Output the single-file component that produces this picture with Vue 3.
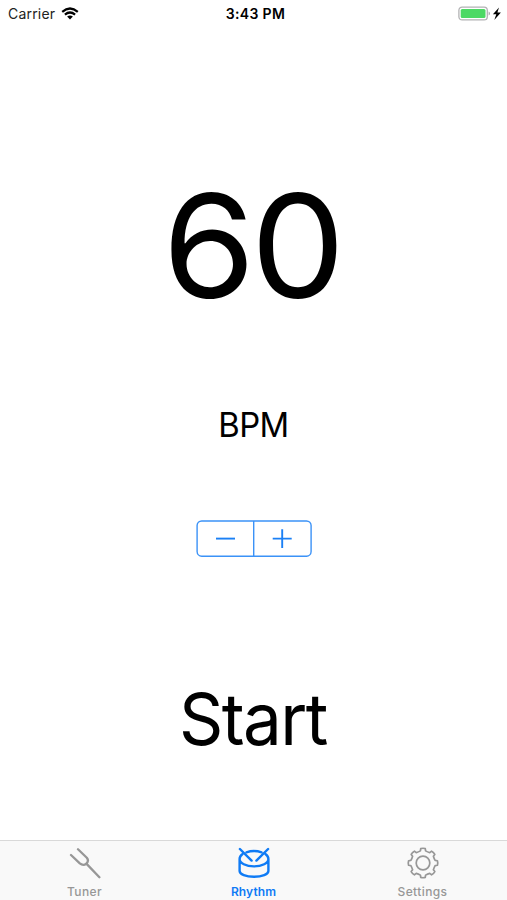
<script setup>
import { ref } from 'vue'

const bpm = ref(60)

// Outline of the settings gear: eight rounded teeth around a centre at 16,16.
function gearPath() {
  const point = (radius, degrees) => {
    const a = (degrees * Math.PI) / 180
    return `${(16 + radius * Math.sin(a)).toFixed(2)} ${(16 - radius * Math.cos(a)).toFixed(2)}`
  }
  let d = ''
  for (let i = 0; i < 8; i++) {
    const a = i * 45
    d += `${i ? 'L' : 'M'}${point(12.4, a - 12)}L${point(14.6, a - 9)}Q${point(15.1, a)} ${point(14.6, a + 9)}L${point(12.4, a + 12)}Q${point(11.9, a + 22.5)} ${point(12.4, a + 33)}`
  }
  return d + 'Z'
}
const gear = gearPath()
</script>

<template>
  <div class="screen">
    <header class="status">
      <div class="carrier">
        <span class="carrier-name">Carrier</span>
        <svg class="wifi" width="18" height="14" viewBox="0 0 18 14">
          <path d="M1.2 4.8Q9-1.8 16.8 4.8M3.9 7.6Q9 3.4 14.1 7.6" fill="none" stroke="#000" stroke-width="2.2" />
          <path d="M6.1 9.6Q9 7.5 11.9 9.6L9 12.6Z" />
        </svg>
      </div>
      <span class="time">3:43 PM</span>
      <div class="power">
        <svg width="45" height="16" viewBox="0 0 45 16">
          <rect x="0.9" y="1.1" width="28.4" height="12.8" rx="3.2" fill="#fff" stroke="#b2b2b4" stroke-width="1.3" />
          <rect x="2.7" y="2.9" width="24.8" height="9.2" rx="1.5" fill="#4cd964" />
          <path d="M30.6 5.5Q32 6 32 7.5T30.6 9.5Z" fill="#a9a9ac" />
          <path d="M41 1.5L34.9 8.3H38.3L36.3 13.9L42.9 6.6H39.4Z" />
        </svg>
      </div>
    </header>

    <main class="metronome">
      <div class="tempo"><span>{{ bpm }}</span></div>
      <div class="unit"><span>BPM</span></div>
      <div class="stepper">
        <svg class="frame" width="116" height="37" viewBox="0 0 116 37">
          <rect x="1.1" y="1" width="114" height="35.2" rx="4.6" />
          <path d="M57.7 1V36.2" />
        </svg>
        <button class="step" aria-label="Decrease" @click="bpm--">
          <svg width="20" height="20" viewBox="0 0 20 20"><path d="M1 9.6H20" /></svg>
        </button>
        <button class="step" aria-label="Increase" @click="bpm++">
          <svg width="20" height="20" viewBox="0 0 20 20"><path d="M.7 9.6H19.7M10.2 .2V19" /></svg>
        </button>
      </div>
      <button class="start"><span>Start</span></button>
    </main>

    <nav class="tabs">
      <a class="tab">
        <svg width="32" height="32" viewBox="0 0 32 32">
          <path d="M2 8L10.8 16.4Q14.3 19.2 17.3 16.6T17.8 10.8L9 2.2M17.6 16.9L30.4 30.2" stroke-width="2.3" />
        </svg>
        <span>Tuner</span>
      </a>
      <a class="tab active">
        <svg width="32" height="32" viewBox="0 0 32 32">
          <path d="M4.6 6.9C2.6 8.3 1.6 10.1 1.6 12C1.6 16.2 8 19.4 16 19.4S30.4 16.2 30.4 12C30.4 10.1 29.4 8.3 27.4 6.9M8.4 5.3C12.6 3.9 19.4 3.9 23.6 5.3M1.6 12V24C1.6 27.4 8 29.8 16 29.8S30.4 27.4 30.4 24V12" />
          <path d="M1.9 2L13.6 13.6M30.1 2L18.4 13.6" />
        </svg>
        <span>Rhythm</span>
      </a>
      <a class="tab">
        <svg width="32" height="32" viewBox="0 0 32 32">
          <path :d="gear" stroke-width="1.7" />
          <circle cx="16" cy="16" r="6.8" stroke-width="1.7" />
        </svg>
        <span>Settings</span>
      </a>
    </nav>
  </div>
</template>

<style>
body {
  margin: 0;
  background: #fff;
}
</style>

<style scoped>
.screen {
  display: flex;
  flex-direction: column;
  width: 507px;
  height: 900px;
  overflow: hidden;
  font-family: Inter, "Liberation Sans", sans-serif;
  color: #000;
}
.status {
  display: grid;
  grid-template-columns: 1fr auto 1fr;
  align-items: center;
  height: 27px;
  padding: 0 4px 0 8px;
  box-sizing: border-box;
}
.carrier {
  display: flex;
  align-items: center;
  gap: 6px;
}
.carrier-name {
  font-size: 14px;
  letter-spacing: 0.2px;
  color: #222;
}
.time {
  font-size: 14px;
  font-weight: 600;
  letter-spacing: 0.35px;
}
.power {
  display: flex;
  justify-content: flex-end;
}
.metronome {
  display: flex;
  flex: 1;
  flex-direction: column;
  align-items: center;
}
.tempo {
  margin-top: 129px;
  height: 180px;
  font-size: 144px;
  line-height: 180px;
  letter-spacing: -4.6px;
}
.tempo span,
.unit span,
.start span {
  display: inline-block;
}
.tempo span {
  margin-right: 4.6px;
  transform: scaleX(1.04);
}
.unit {
  margin-top: 69px;
  height: 40px;
  font-size: 34px;
  line-height: 40px;
  letter-spacing: -0.6px;
}
.unit span {
  margin-right: 0.6px;
  transform: scaleX(0.965);
}
.stepper {
  display: grid;
  grid-template-columns: 58px 56px;
  width: 116px;
  height: 37px;
  margin-top: 75px;
}
.frame {
  grid-area: 1 / 1 / 2 / 3;
  fill: none;
  stroke: #3b92f7;
  stroke-width: 1.4;
}
.step {
  display: flex;
  grid-row: 1;
  align-items: center;
  justify-content: center;
  padding: 0;
  border: 0;
  background: none;
}
.step:nth-of-type(1) {
  grid-column: 1;
}
.step:nth-of-type(2) {
  grid-column: 2;
}
.step path {
  fill: none;
  stroke: #1b80f5;
  stroke-width: 1.9;
}
.start {
  height: 90px;
  margin-top: 117px;
  padding: 0;
  border: 0;
  background: none;
  color: inherit;
  font: 72px/90px Inter, "Liberation Sans", sans-serif;
  letter-spacing: -1.7px;
}
.start span {
  margin-right: 1.7px;
  transform: scaleX(0.96);
}
.tabs {
  display: grid;
  grid-template-columns: repeat(3, 1fr);
  height: 60px;
  box-sizing: border-box;
  border-top: 1px solid #d9d9d9;
  background: #f9f9f9;
}
.tab {
  display: flex;
  flex-direction: column;
  align-items: center;
  padding-top: 6px;
  color: #979797;
  font-size: 12px;
  font-weight: 500;
  line-height: 16px;
  letter-spacing: 0.4px;
}
.tab span {
  margin-top: 5px;
}
.tab.active {
  color: #0f7bf5;
  font-weight: 600;
  letter-spacing: 0.1px;
}
.tab path,
.tab circle {
  fill: none;
  stroke: currentColor;
  stroke-linecap: round;
  stroke-linejoin: round;
}
.tab.active path {
  stroke-width: 2.4;
}
</style>
